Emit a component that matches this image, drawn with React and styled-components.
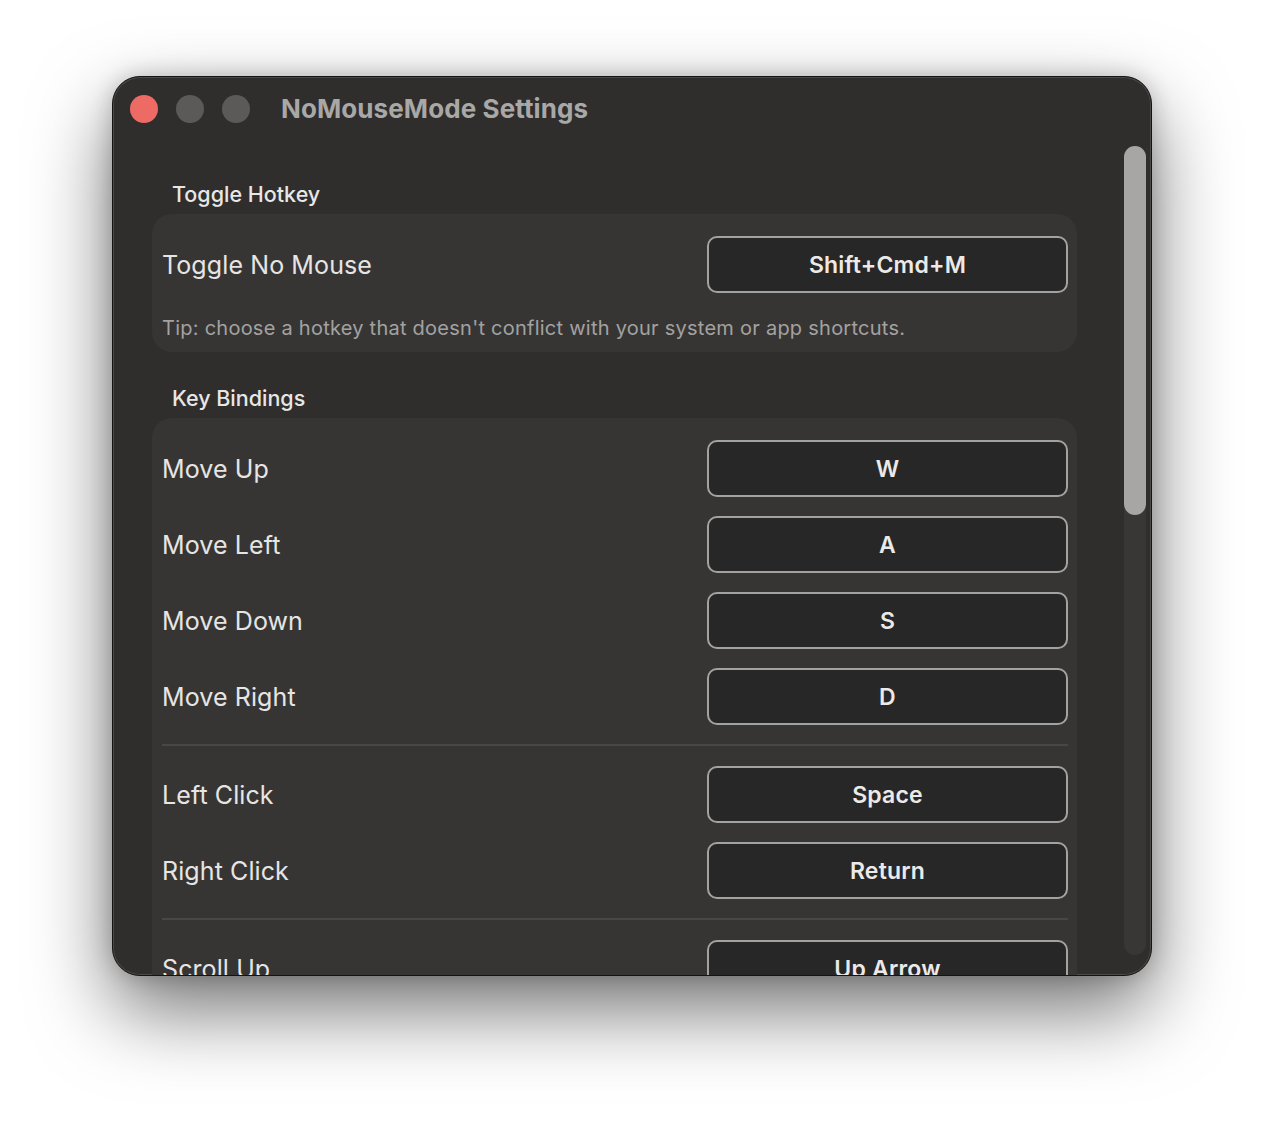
import React from 'react';
import styled, { createGlobalStyle } from 'styled-components';

const GlobalStyle = createGlobalStyle`
  html, body {
    margin: 0;
    padding: 0;
    background: #ffffff;
  }
  body {
    font-family: Inter, "Noto Sans", "Liberation Sans", sans-serif;
    -webkit-font-smoothing: antialiased;
  }
`;

const Page = styled.div`
  width: 1264px;
  height: 1124px;
  padding: 76px 0 0 112px;
  box-sizing: border-box;
  background: #ffffff;
`;

const Window = styled.div`
  width: 1040px;
  height: 900px;
  box-sizing: border-box;
  border-radius: 28px;
  background: #2f2e2d;
  border: 1px solid #141414;
  box-shadow: inset 0 0 0 1px rgba(255, 255, 255, 0.14), 0 34px 80px rgba(0, 0, 0, 0.55),
    0 0 22px rgba(0, 0, 0, 0.2);
  overflow: hidden;
  display: flex;
  flex-direction: column;
`;

const TitleBar = styled.div`
  height: 63px;
  flex-shrink: 0;
  display: flex;
  align-items: center;
  padding-left: 17px;
`;

const Lights = styled.div`
  display: flex;
  gap: 18px;
  margin-right: 31px;
`;

const Light = styled.span`
  width: 28px;
  height: 28px;
  border-radius: 50%;
  background: ${(p) => (p.$red ? '#ee6a64' : '#5b5a58')};
`;

const Title = styled.div`
  font-size: 26px;
  font-weight: 700;
  color: #a9a8a6;
  letter-spacing: 0.1px;
`;

const Body = styled.div`
  flex: 1;
  min-height: 0;
  display: flex;
`;

const Content = styled.div`
  flex: 1;
  min-width: 0;
  overflow: hidden;
  padding: 40px 0 0 39px;
`;

const Scrollbar = styled.div`
  width: 22px;
  margin: 6px 5px 20px 47px;
  border-radius: 11px;
  background: #383736;
`;

const Thumb = styled.div`
  height: 369px;
  border-radius: 11px;
  background: #a7a6a4;
`;

const SectionTitle = styled.div`
  font-size: 21.5px;
  line-height: 28px;
  font-weight: 500;
  color: #e8e7e6;
  padding-left: 20px;
  margin: ${(p) => (p.$first ? '0' : '32px')} 0 6px;
`;

const Card = styled.div`
  width: 925px;
  box-sizing: border-box;
  background: #363534;
  border-radius: 20px;
  padding: 22px 9px ${(p) => p.$bottom || '22px'} 10px;
  display: flex;
  flex-direction: column;
`;

const Row = styled.div`
  display: flex;
  align-items: center;
  justify-content: space-between;
  & + & {
    margin-top: 19px;
  }
`;

const Label = styled.div`
  font-size: 25px;
  color: #e6e5e4;
  letter-spacing: 0.1px;
`;

const KeyButton = styled.div`
  width: 361px;
  height: 57px;
  box-sizing: border-box;
  border: 2px solid #a3a2a0;
  border-radius: 10px;
  background: #272727;
  display: flex;
  align-items: center;
  justify-content: center;
  font-size: 23px;
  font-weight: 600;
  color: #ebeae9;
  letter-spacing: 0.2px;
`;

const Tip = styled.div`
  margin-top: 23px;
  font-size: 20px;
  line-height: 24px;
  letter-spacing: 0.25px;
  color: #a3a2a0;
`;

const Divider = styled.div`
  height: 2px;
  background: #484746;
  margin: 19px 0 20px;
`;

const groups = [
  [
    ['Move Up', 'W'],
    ['Move Left', 'A'],
    ['Move Down', 'S'],
    ['Move Right', 'D'],
  ],
  [
    ['Left Click', 'Space'],
    ['Right Click', 'Return'],
  ],
  [
    ['Scroll Up', 'Up Arrow'],
    ['Scroll Down', 'Down Arrow'],
  ],
];

export default function App() {
  return (
    <>
      <GlobalStyle />
      <Page>
        <Window>
          <TitleBar>
            <Lights>
              <Light $red />
              <Light />
              <Light />
            </Lights>
            <Title>NoMouseMode Settings</Title>
          </TitleBar>
          <Body>
            <Content>
              <SectionTitle $first>Toggle Hotkey</SectionTitle>
              <Card $bottom="12px">
                <Row>
                  <Label>Toggle No Mouse</Label>
                  <KeyButton>Shift+Cmd+M</KeyButton>
                </Row>
                <Tip>Tip: choose a hotkey that doesn't conflict with your system or app shortcuts.</Tip>
              </Card>

              <SectionTitle>Key Bindings</SectionTitle>
              <Card>
                {groups.map((group, gi) => (
                  <React.Fragment key={gi}>
                    {gi > 0 && <Divider />}
                    {group.map(([label, key]) => (
                      <Row key={label}>
                        <Label>{label}</Label>
                        <KeyButton>{key}</KeyButton>
                      </Row>
                    ))}
                  </React.Fragment>
                ))}
              </Card>
            </Content>
            <Scrollbar>
              <Thumb />
            </Scrollbar>
          </Body>
        </Window>
      </Page>
    </>
  );
}
